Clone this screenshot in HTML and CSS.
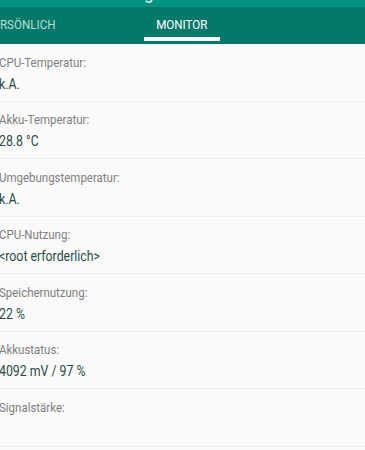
FILE: index.html
```html
<!DOCTYPE html>
<html lang="de">
<head>
<meta charset="utf-8">
<link rel="stylesheet" href="styles.css">
</head>
<body>
<div class="appbar">
  <div class="title">Wettmeldungen</div>
</div>
<div class="tabs">
  <div class="tab tab-left"><span class="squeeze">PERSÖNLICH</span></div>
  <div class="tab tab-active"><span class="squeeze center">MONITOR</span><span class="indicator"></span></div>
</div>
<div class="list">
  <div class="row"><div class="label">CPU-Temperatur:</div><div class="value">k.A.</div></div>
  <div class="row"><div class="label">Akku-Temperatur:</div><div class="value">28.8 °C</div></div>
  <div class="row"><div class="label">Umgebungstemperatur:</div><div class="value">k.A.</div></div>
  <div class="row"><div class="label">CPU-Nutzung:</div><div class="value">&lt;root erforderlich&gt;</div></div>
  <div class="row"><div class="label">Speichernutzung:</div><div class="value">22 %</div></div>
  <div class="row"><div class="label">Akkustatus:</div><div class="value">4092 mV / 97 %</div></div>
  <div class="row"><div class="label">Signalstärke:</div><div class="value"></div></div>
</div>
</body>
</html>
```
FILE: styles.css
```css
html, body {
  margin: 0;
  padding: 0;
  background: #fafafa;
  font-family: Roboto, "Noto Sans", sans-serif;
  overflow: hidden;
}
.appbar {
  height: 7px;
  background: #009482;
  overflow: hidden;
}
.title {
  color: #d8f0ec;
  font-size: 20px;
  line-height: 20px;
  margin-top: -18px;
  padding-left: 60px;
  transform: scaleX(0.86);
  transform-origin: left;
}
.tabs {
  height: 37px;
  background: #04796a;
  display: flex;
  color: #ffffff;
  font-size: 13.5px;
}
.tab {
  display: flex;
  align-items: center;
  position: relative;
  padding-bottom: 4px;
}
.squeeze {
  display: inline-block;
  transform: scaleX(0.86);
  transform-origin: left;
  white-space: nowrap;
}
.squeeze.center {
  transform-origin: center;
}
.tab-left {
  width: 74px;
  margin-left: -14px;
  color: #b9dcd6;
}
.tab-active {
  width: 76px;
  margin-left: 84px;
  justify-content: center;
}
.indicator {
  position: absolute;
  left: 0;
  right: 0;
  bottom: 3px;
  height: 4px;
  background: #ffffff;
}
.list {
  display: flex;
  flex-direction: column;
}
.row {
  height: 57.5px;
  box-sizing: border-box;
  border-bottom: 1px solid #ececec;
  margin-left: -1px;
  display: flex;
  flex-direction: column;
  justify-content: center;
  gap: 4px;
  padding-top: 3px;
}
.label, .value {
  transform: scaleX(0.85);
  transform-origin: left;
  white-space: nowrap;
}
.label {
  font-size: 13.5px;
  line-height: 17px;
  color: #808080;
}
.value {
  font-size: 14.5px;
  line-height: 19px;
  min-height: 19px;
  color: #2a4a46;
}
```
